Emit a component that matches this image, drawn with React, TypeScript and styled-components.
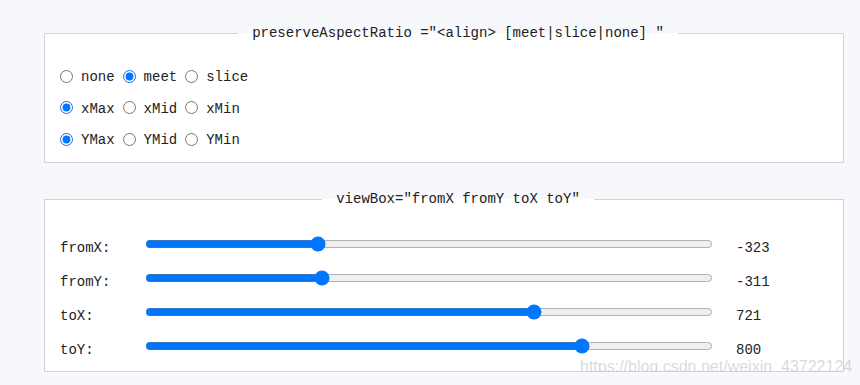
import React from 'react';
import styled, { createGlobalStyle } from 'styled-components';

const GlobalStyle = createGlobalStyle`
  body {
    margin: 0;
    background: #f7f8fc;
    font-family: 'Liberation Mono', 'Courier New', monospace;
    font-size: 14px;
    color: #222;
  }
`;

const Page = styled.div`
  position: relative;
  width: 800px;
  padding: 25px 0 0 44px;
  display: flex;
  flex-direction: column;
  gap: 28px;
`;

// legend sits 14px right of centre, so the left padding is wider
const Box = styled.fieldset<{ $bottom: number }>`
  margin: 0;
  min-width: 0;
  background: #fff;
  border: 1px solid #d3d3d3;
  padding: 0 15px ${({ $bottom }) => $bottom}px 43px;
`;

const Legend = styled.legend`
  margin: 0 auto;
  padding: 0 14px;
  line-height: 16px;
  white-space: pre;
`;

const Rows = styled.div<{ $gap: number; $top: number }>`
  display: flex;
  flex-direction: column;
  gap: ${({ $gap }) => $gap}px;
  padding-top: ${({ $top }) => $top}px;
  margin-left: -28px;
`;

const RadioRow = styled.div`
  display: flex;
  align-items: center;
  gap: 8px;
  height: 20px;
  line-height: 20px;
`;

const Option = styled.label`
  display: flex;
  align-items: center;
  gap: 8px;
`;

const Radio = styled.input`
  margin: 0;
  width: 13px;
  height: 13px;
`;

const OptionText = styled.span`
  padding-top: 2px;
`;

const SliderRow = styled.div`
  display: grid;
  grid-template-columns: 85px 568px auto;
  align-items: center;
  height: 20px;
  line-height: 20px;
`;

const Label = styled.span<{ $indent?: number }>`
  padding-top: 8px;
  margin-left: ${({ $indent }) => $indent ?? 0}px;
`;

const Range = styled.input`
  margin: 0;
  width: 568px;
`;

const Watermark = styled.div`
  position: absolute;
  left: 580px;
  top: 358px;
  font-family: 'Liberation Sans', Arial, sans-serif;
  font-size: 16px;
  white-space: nowrap;
  color: rgba(205, 205, 210, 0.75);
  pointer-events: none;
`;

const RADIO_ROWS = [
  { name: 'mos', items: ['none', 'meet', 'slice'], checked: 'meet' },
  { name: 'x', items: ['xMax', 'xMid', 'xMin'], checked: 'xMax' },
  { name: 'y', items: ['YMax', 'YMid', 'YMin'], checked: 'YMax' },
];

const SLIDERS = [
  { label: 'fromX:', min: -800, max: 800, value: -323 },
  { label: 'fromY:', min: -800, max: 800, value: -311 },
  { label: 'toX:', min: 100, max: 1000, value: 721 },
  { label: 'toY:', min: 100, max: 1000, value: 800 },
];

export default function App() {
  return (
    <>
      <GlobalStyle />
      <Page>
        <Box $bottom={13}>
          <Legend>preserveAspectRatio ="&lt;align&gt; [meet|slice|none] "</Legend>
          <Rows $gap={11.5} $top={25}>
            {RADIO_ROWS.map((row) => (
              <RadioRow key={row.name}>
                {row.items.map((item) => (
                  <Option key={item}>
                    <Radio type="radio" name={row.name} defaultChecked={item === row.checked} />
                    <OptionText>{item}</OptionText>
                  </Option>
                ))}
              </RadioRow>
            ))}
          </Rows>
        </Box>
        <Box $bottom={19}>
          <Legend>viewBox="fromX fromY toX toY"</Legend>
          <Rows $gap={14} $top={23}>
            {SLIDERS.map((s) => (
              <SliderRow key={s.label}>
                <Label>{s.label}</Label>
                <Range type="range" min={s.min} max={s.max} defaultValue={s.value} />
                <Label $indent={23}>{s.value}</Label>
              </SliderRow>
            ))}
          </Rows>
        </Box>
        <Watermark>https://blog.csdn.net/weixin_43722124</Watermark>
      </Page>
    </>
  );
}
